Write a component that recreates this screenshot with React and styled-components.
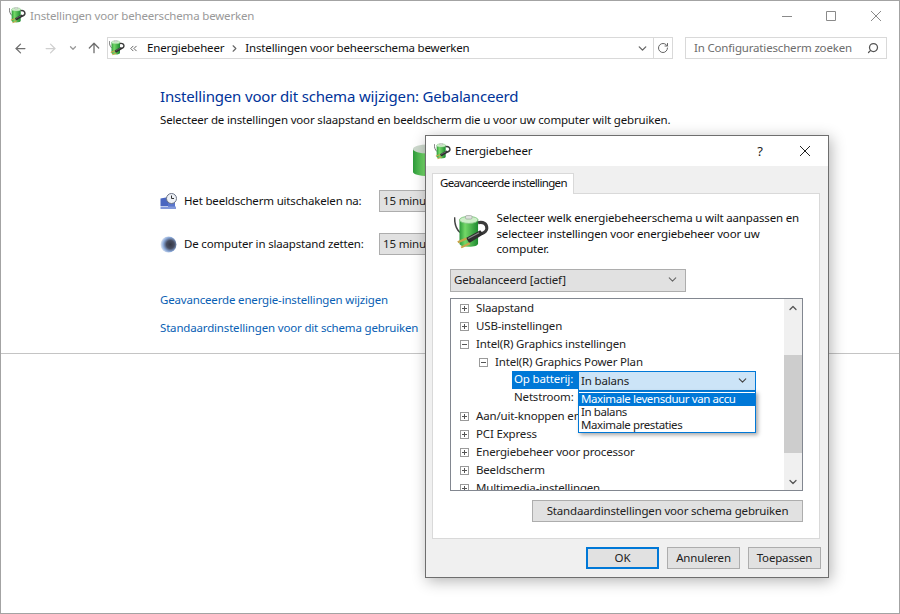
import React from 'react';
import styled, { createGlobalStyle } from 'styled-components';
import { ArrowLeft, ArrowRight, ArrowUp, ChevronDown, ChevronRight, ChevronUp, ChevronsLeft, RotateCw, Search } from 'lucide-react';

const Global = createGlobalStyle`
    html, body { margin: 0; padding: 0; background: #fff; }
    * { box-sizing: border-box; }
    body { font-family: "Noto Sans", "Open Sans", sans-serif; font-size: 11.5px; letter-spacing: -0.17px; color: #111; }
`;

const Window = styled.div`
    position: relative;
    width: 900px;
    height: 614px;
    overflow: hidden;
    background: #fff;
    border: 1px solid #a3a3a3;
`;
const TitleBar = styled.div`
    height: 29px;
    display: flex;
    align-items: center;
    padding-left: 8px;
    gap: 4px;
    color: #999;
`;
const WindowControls = styled.div`
    margin-left: auto;
    display: flex;
    align-items: center;
    color: ${p => p.$color || '#777'};
`;
const ControlBtn = styled.div`
    width: ${p => p.$w || 46}px;
    height: 29px;
    font-size: 13px;
    display: flex;
    align-items: center;
    justify-content: center;
`;
const NavBar = styled.div`
    height: 32px;
    margin-top: 2px;
    display: flex;
    align-items: center;
    padding-left: 9px;
`;
const NavBtn = styled.div`
    width: ${p => p.$w}px;
    margin-left: ${p => p.$ml || 0}px;
    display: flex;
    justify-content: center;
    color: ${p => p.$color};
`;
const AddressBar = styled.div`
    margin-left: 3px;
    width: 566px;
    height: 22px;
    border: 1px solid #d9d9d9;
    display: flex;
    align-items: center;
    padding-left: 1px;
`;
const BackCrumbs = styled(ChevronsLeft)`
    margin: 0 3px;
    color: #555;
`;
const Crumb = styled.span`
    margin: 0 5px;
    padding-bottom: 2px;
`;
const CrumbArrow = styled(ChevronRight)`
    color: #666;
`;
const AddressEnd = styled.div`
    margin-left: auto;
    display: flex;
    height: 100%;
    align-items: center;
    color: #666;
`;
const RefreshBtn = styled.div`
    width: 19px;
    height: 100%;
    border-left: 1px solid #d9d9d9;
    margin-left: 4px;
    display: flex;
    align-items: center;
    justify-content: center;
`;
const SearchBox = styled.div`
    margin-left: 12px;
    width: 202px;
    height: 22px;
    border: 1px solid #d9d9d9;
    display: flex;
    align-items: center;
    justify-content: space-between;
    padding: 0 7px 0 8px;
    color: #6d6d6d;
`;
const SearchText = styled.span`
    padding-bottom: 2px;
`;
const SearchGlyph = styled(Search)`
    transform: scaleX(-1);
    color: #555;
`;
const Content = styled.div`
    height: 290px;
    padding: 22px 0 0 159px;
    border-bottom: 1px solid #c4c4c4;
`;
const Heading = styled.h1`
    margin: 0;
    font-size: 15px;
    line-height: 20px;
    font-weight: 400;
    color: #003399;
`;
const SubText = styled.p`
    margin: 5px 0 0;
    line-height: 18px;
`;
const PlanIcon = styled.div`
    margin: 15px 0 14px 253px;
    height: 32px;
`;
const SettingRow = styled.div`
    display: flex;
    align-items: center;
    height: 22px;
    margin-bottom: 21px;
`;
const RowIcon = styled.div`
    width: 24px;
    display: flex;
`;
const RowLabel = styled.div`
    width: 195px;
    padding-bottom: 2px;
`;
const Select = styled.div`
    width: ${p => p.$w}px;
    height: ${p => p.$h || 22}px;
    background: #e1e1e1;
    border: 1px solid #adadad;
    display: flex;
    align-items: center;
    justify-content: space-between;
    padding: 0 6px 2px 3px;
    color: #222;
    flex-shrink: 0;
`;
const LinkList = styled.div`
    margin-top: 36px;
    display: flex;
    flex-direction: column;
    gap: 10px;
`;
const Link = styled.a`
    color: #0a5fb4;
    line-height: 18px;
`;

const Dialog = styled.div`
    position: absolute;
    left: 424px;
    top: 134px;
    width: 404px;
    height: 443px;
    background: #f0f0f0;
    border: 1px solid #6e6e6e;
    box-shadow: 2px 3px 14px rgba(0, 0, 0, 0.3);
    display: flex;
    flex-direction: column;
`;
const DialogTitle = styled.div`
    height: 30px;
    flex-shrink: 0;
    background: #fff;
    display: flex;
    align-items: center;
    padding-left: 8px;
    gap: 4px;
`;
const DialogName = styled.span`
    padding-bottom: 2px;
`;
const DialogBody = styled.div`
    flex: 1;
    padding: 7px 8px 0 6px;
    display: flex;
    flex-direction: column;
`;
const Tab = styled.div`
    width: 142px;
    height: 21px;
    background: #fff;
    border: 1px solid #d9d9d9;
    border-bottom: none;
    padding-left: 7px;
    line-height: 17px;
    margin-bottom: -1px;
    position: relative;
    z-index: 1;
    white-space: nowrap;
    letter-spacing: -0.65px;
`;
const Panel = styled.div`
    width: 388px;
    height: 346px;
    background: #fff;
    border: 1px solid #d9d9d9;
    padding: 15px 16px 0 17px;
`;
const Intro = styled.div`
    display: flex;
    height: 60px;
`;
const IntroIcon = styled.div`
    width: 47px;
    padding: 6px 0 0 4px;
`;
const IntroText = styled.div`
    width: 310px;
    padding-top: 1px;
    line-height: 15.5px;
`;
const TreeBox = styled.div`
    margin-top: 6px;
    width: 353px;
    height: 193px;
    border: 1px solid #828790;
    display: flex;
`;
const TreeList = styled.div`
    flex: 1;
    overflow: hidden;
`;
const TreeRow = styled.div`
    height: 18px;
    display: flex;
    align-items: center;
    white-space: nowrap;
    padding: 0 0 2px ${p => p.$indent}px;
    color: #222;
`;
const Expander = styled.span`
    position: relative;
    width: 9px;
    height: 9px;
    margin: 2px 7px 0 0;
    border: 1px solid #9a9a9a;
    flex-shrink: 0;
    &::before {
        content: "";
        position: absolute;
        left: 1px;
        top: 3px;
        width: 5px;
        height: 1px;
        background: #555;
    }
    &::after {
        content: "";
        display: ${p => (p.$open ? 'none' : 'block')};
        position: absolute;
        left: 3px;
        top: 1px;
        width: 1px;
        height: 5px;
        background: #555;
    }
`;
const ValueLabel = styled.div`
    width: 66px;
    height: 18px;
    align-self: flex-start;
    padding-left: 2px;
    line-height: 16px;
    color: ${p => (p.$active ? '#fff' : '#222')};
    background: ${p => (p.$active ? '#0078d7' : 'transparent')};
`;
const Combo = styled.div`
    position: relative;
    align-self: flex-start;
    width: 178px;
    height: 20px;
    background: #cce4f7;
    border: 1px solid #0078d7;
    display: flex;
    align-items: center;
    justify-content: space-between;
    padding: 0 6px 2px 2px;
`;
const Dropdown = styled.div`
    position: absolute;
    z-index: 2;
    left: -1px;
    top: 19px;
    width: 178px;
    height: 42px;
    padding-top: 1px;
    background: #fff;
    border: 1px solid #0078d7;
    box-shadow: 2px 2px 4px rgba(0, 0, 0, 0.35);
    letter-spacing: -0.4px;
`;
const DropItem = styled.div`
    height: 13px;
    line-height: 12px;
    padding-left: 2px;
    color: ${p => (p.$active ? '#fff' : '#222')};
    background: ${p => (p.$active ? '#0078d7' : '#fff')};
`;
const Scrollbar = styled.div`
    width: 18px;
    background: #f0f0f0;
    display: flex;
    flex-direction: column;
    align-items: center;
    color: #555;
`;
const ScrollEnd = styled.div`
    height: 17px;
    display: flex;
    align-items: center;
`;
const Thumb = styled.div`
    width: 100%;
    height: 98px;
    margin: 39px 0 auto;
    background: #cdcdcd;
`;
const PanelActions = styled.div`
    display: flex;
    justify-content: flex-end;
    margin-top: 9px;
`;
const Button = styled.div`
    width: ${p => p.$w}px;
    height: 22px;
    background: #e1e1e1;
    border: ${p => (p.$primary ? '2px solid #0078d7' : '1px solid #adadad')};
    display: flex;
    align-items: center;
    justify-content: center;
    padding-bottom: 2px;
    color: #222;
`;
const DialogFooter = styled.div`
    display: flex;
    justify-content: flex-end;
    gap: 8px;
    margin-top: 8px;
    margin-right: -1px;
`;

// battery with plug, the same drawing at 16 and 35 px
const PowerIcon = ({ size, id }) => (
    <svg width={size} height={size} viewBox="0 0 32 32">
        <defs>
            <linearGradient id={id} x1="0" x2="1" y1="0" y2="0">
                <stop offset="0" stopColor="#2c9a3a" />
                <stop offset="0.3" stopColor="#74d868" />
                <stop offset="1" stopColor="#1d8a2f" />
            </linearGradient>
        </defs>
        <path d="M0.500 2c0 6 1.500 11 5 14" fill="none" stroke="#444" strokeWidth="1.400" />
        <path d="M5 4v22c0 1.800 3.500 3 8.500 3s8.500-1.200 8.500-3V4z" fill={`url(#${id})`} />
        <ellipse cx="13.500" cy="4.500" rx="8.500" ry="3.200" fill="#cdeec8" stroke="#7cc47c" strokeWidth="0.800" />
        <rect x="10.500" y="0.500" width="6" height="3.200" rx="1.200" fill="#dfe3df" stroke="#8a8f8a" strokeWidth="0.500" />
        <path d="M22 7c5-1 8 1 8 5 0 3-2 4-5 5" fill="none" stroke="#3c3c3c" strokeWidth="2.800" />
        <path d="M11 21l13-7 3 3.500-13 8z" fill="#2e2e2e" />
        <path d="M13 21.500l10-5.300" stroke="#8b8b8b" strokeWidth="1" />
        <path d="M3 24l8-3.500 1 1.800-8 3.500zM6 29l8-4 1 1.800-8 3.700z" fill="#c8a44a" />
    </svg>
);

const BatteryIcon = () => (
    <svg width="30" height="32" viewBox="0 0 30 32">
        <defs>
            <linearGradient id="planCell" x1="0" x2="1" y1="0" y2="0">
                <stop offset="0" stopColor="#2c9a3a" />
                <stop offset="0.35" stopColor="#6fd566" />
                <stop offset="1" stopColor="#1d8a2f" />
            </linearGradient>
        </defs>
        <path d="M0 5v23c0 2 6 4 15 4s15-2 15-4V5z" fill="url(#planCell)" />
        <ellipse cx="15" cy="5" rx="15" ry="4.500" fill="#cdd9cd" />
    </svg>
);

const MonitorClockIcon = () => (
    <svg width="17" height="17" viewBox="0 0 17 17">
        <path d="M0.500 5.500l8-1.500v9h-8z" fill="#4a66c0" />
        <path d="M8 9h7v5H8z" fill="#5a76cc" />
        <path d="M0.500 13.500H16V16H0.500z" fill="#8298da" />
        <circle cx="11.500" cy="5.500" r="5" fill="#eef1f6" stroke="#6c7486" />
        <path d="M11.500 2.500v3h2.500" fill="none" stroke="#333" />
    </svg>
);

const SleepIcon = () => (
    <svg width="17" height="17" viewBox="0 0 17 17">
        <defs>
            <radialGradient id="moon" cx="0.62" cy="0.5" r="0.62">
                <stop offset="0" stopColor="#343846" />
                <stop offset="0.4" stopColor="#484e62" />
                <stop offset="0.7" stopColor="#86a4d4" />
                <stop offset="1" stopColor="#e3ebf7" />
            </radialGradient>
        </defs>
        <circle cx="8.500" cy="8.500" r="8" fill="url(#moon)" />
    </svg>
);

const Thin = ({ d, size = 12 }) => (
    <svg width={size} height={size} viewBox="0 0 12 12" fill="none" stroke="currentColor" strokeWidth="1">
        <path d={d} />
    </svg>
);

const App = () => {
    return (
        <Window>
            <Global />
            <TitleBar>
                <PowerIcon size={17} id="cellTitle" />
                <span>Instellingen voor beheerschema bewerken</span>
                <WindowControls $color="#8a8a8a">
                    <ControlBtn $w={44}><Thin d="M1 6.500h10" /></ControlBtn>
                    <ControlBtn $w={44}><Thin d="M1.500 1.500h9v9h-9z" /></ControlBtn>
                    <ControlBtn $w={46}><Thin d="M1 1l10 10M11 1L1 11" /></ControlBtn>
                </WindowControls>
            </TitleBar>
            <NavBar>
                <NavBtn $w={20} $color="#6f6f6f"><ArrowLeft size={15} /></NavBtn>
                <NavBtn $w={24} $ml={8} $color="#cfcfcf"><ArrowRight size={15} /></NavBtn>
                <NavBtn $w={12} $ml={5} $color="#999"><ChevronDown size={10} strokeWidth={3} /></NavBtn>
                <NavBtn $w={20} $ml={5} $color="#6f6f6f"><ArrowUp size={16} /></NavBtn>
                <AddressBar>
                    <PowerIcon size={16} id="cellAddress" />
                    <BackCrumbs size={11} />
                    <Crumb>Energiebeheer</Crumb>
                    <CrumbArrow size={11} strokeWidth={2.5} />
                    <Crumb>Instellingen voor beheerschema bewerken</Crumb>
                    <AddressEnd>
                        <ChevronDown size={13} strokeWidth={2.5} />
                        <RefreshBtn><RotateCw size={12} /></RefreshBtn>
                    </AddressEnd>
                </AddressBar>
                <SearchBox>
                    <SearchText>In Configuratiescherm zoeken</SearchText>
                    <SearchGlyph size={12} strokeWidth={2.5} />
                </SearchBox>
            </NavBar>
            <Content>
                <Heading>Instellingen voor dit schema wijzigen: Gebalanceerd</Heading>
                <SubText>Selecteer de instellingen voor slaapstand en beeldscherm die u voor uw computer wilt gebruiken.</SubText>
                <PlanIcon><BatteryIcon /></PlanIcon>
                <SettingRow>
                    <RowIcon><MonitorClockIcon /></RowIcon>
                    <RowLabel>Het beeldscherm uitschakelen na:</RowLabel>
                    <Select $w={120}>15 minuten</Select>
                </SettingRow>
                <SettingRow>
                    <RowIcon><SleepIcon /></RowIcon>
                    <RowLabel>De computer in slaapstand zetten:</RowLabel>
                    <Select $w={120}>15 minuten</Select>
                </SettingRow>
                <LinkList>
                    <Link>Geavanceerde energie-instellingen wijzigen</Link>
                    <Link>Standaardinstellingen voor dit schema gebruiken</Link>
                </LinkList>
            </Content>

            <Dialog>
                <DialogTitle>
                    <PowerIcon size={17} id="cellDialog" />
                    <DialogName>Energiebeheer</DialogName>
                    <WindowControls $color="#222">
                        <ControlBtn $w={44}>?</ControlBtn>
                        <ControlBtn $w={46}><Thin d="M1 1l10 10M11 1L1 11" /></ControlBtn>
                    </WindowControls>
                </DialogTitle>
                <DialogBody>
                    <Tab>Geavanceerde instellingen</Tab>
                    <Panel>
                        <Intro>
                            <IntroIcon><PowerIcon size={35} id="cellIntro" /></IntroIcon>
                            <IntroText>Selecteer welk energiebeheerschema u wilt aanpassen en selecteer instellingen voor energiebeheer voor uw computer.</IntroText>
                        </Intro>
                        <Select $w={236} $h={23}>
                            Gebalanceerd [actief]
                            <ChevronDown size={13} color="#666" />
                        </Select>
                        <TreeBox>
                            <TreeList>
                                <TreeRow $indent={9}><Expander />Slaapstand</TreeRow>
                                <TreeRow $indent={9}><Expander />USB-instellingen</TreeRow>
                                <TreeRow $indent={9}><Expander $open />Intel(R) Graphics instellingen</TreeRow>
                                <TreeRow $indent={28}><Expander $open />Intel(R) Graphics Power Plan</TreeRow>
                                <TreeRow $indent={61}>
                                    <ValueLabel $active>Op batterij:</ValueLabel>
                                    <Combo>
                                        In balans
                                        <ChevronDown size={13} color="#444" />
                                        <Dropdown>
                                            <DropItem $active>Maximale levensduur van accu</DropItem>
                                            <DropItem>In balans</DropItem>
                                            <DropItem>Maximale prestaties</DropItem>
                                        </Dropdown>
                                    </Combo>
                                </TreeRow>
                                <TreeRow $indent={61}><ValueLabel>Netstroom:</ValueLabel></TreeRow>
                                <TreeRow $indent={9}><Expander />Aan/uit-knoppen en deksel</TreeRow>
                                <TreeRow $indent={9}><Expander />PCI Express</TreeRow>
                                <TreeRow $indent={9}><Expander />Energiebeheer voor processor</TreeRow>
                                <TreeRow $indent={9}><Expander />Beeldscherm</TreeRow>
                                <TreeRow $indent={9}><Expander />Multimedia-instellingen</TreeRow>
                            </TreeList>
                            <Scrollbar>
                                <ScrollEnd><ChevronUp size={12} strokeWidth={2.5} /></ScrollEnd>
                                <Thumb />
                                <ScrollEnd><ChevronDown size={12} strokeWidth={2.5} /></ScrollEnd>
                            </Scrollbar>
                        </TreeBox>
                        <PanelActions><Button $w={271}>Standaardinstellingen voor schema gebruiken</Button></PanelActions>
                    </Panel>
                    <DialogFooter>
                        <Button $w={73} $primary>OK</Button>
                        <Button $w={73}>Annuleren</Button>
                        <Button $w={73}>Toepassen</Button>
                    </DialogFooter>
                </DialogBody>
            </Dialog>
        </Window>
    );
};

export default App;
